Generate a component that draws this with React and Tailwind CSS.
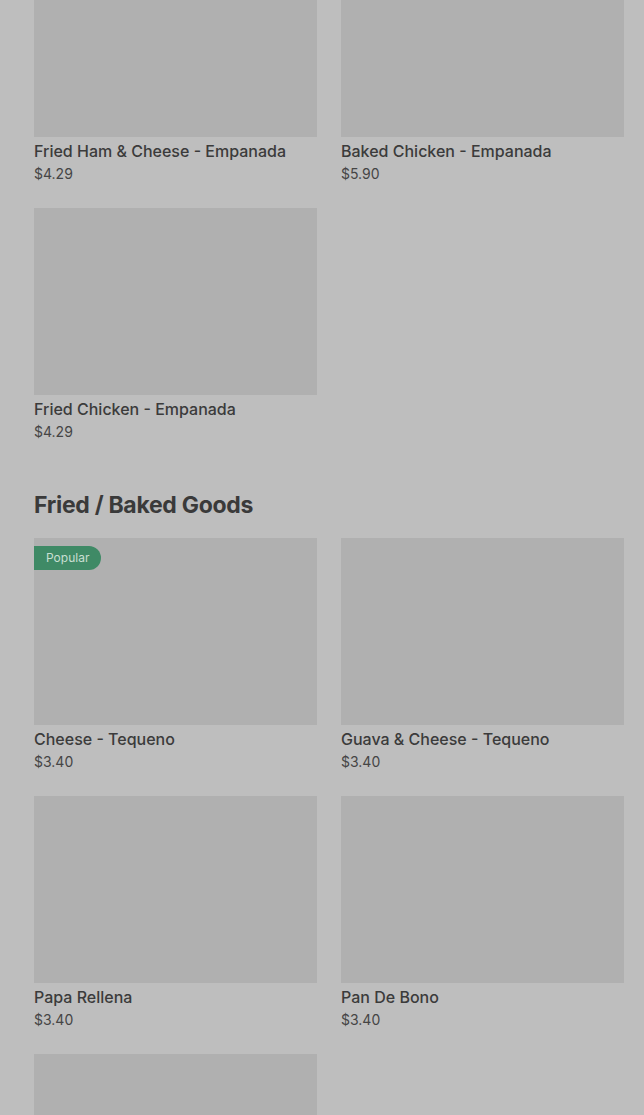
import React from "react";

function Card({ name, price, popular }) {
  return (
    <div className="flex flex-col">
      <div className="relative h-[187px] bg-[#b0b0b0]">
        {popular && (
          <span className="absolute left-0 top-[8px] h-[24px] px-[12px] flex items-center rounded-r-full bg-[#3f8a66] text-[#c9dfd2] text-[12px] leading-none">
            Popular
          </span>
        )}
      </div>
      {name && (
        <>
          <div className="mt-[4px] text-[16px] leading-[20px] font-medium text-[#3b3b3b]">{name}</div>
          <div className="mt-[3px] text-[14px] leading-[20px] text-[#454545]">{price}</div>
        </>
      )}
    </div>
  );
}

export default function App() {
  const first = [
    { name: "Fried Ham & Cheese - Empanada", price: "$4.29" },
    { name: "Baked Chicken - Empanada", price: "$5.90" },
    { name: "Fried Chicken - Empanada", price: "$4.29" },
  ];
  const second = [
    { name: "Cheese - Tequeno", price: "$3.40", popular: true },
    { name: "Guava & Cheese - Tequeno", price: "$3.40" },
    { name: "Papa Rellena", price: "$3.40" },
    { name: "Pan De Bono", price: "$3.40" },
    { name: "", price: "" },
  ];
  return (
    <div className="w-[644px] h-[1115px] overflow-hidden bg-[#bebebe]" style={{ fontFamily: "Inter, 'Noto Sans', sans-serif" }}>
      <div className="mt-[-50px] pl-[34px] pr-[20px]">
        <div className="grid grid-cols-2 gap-x-[24px] gap-y-[24px]">
          {first.map((c, i) => (
            <Card key={i} {...c} />
          ))}
        </div>
        <h2 className="mt-[47px] text-[23px] leading-[32px] font-bold text-[#3a3a3a] tracking-[-0.3px]">Fried / Baked Goods</h2>
        <div className="mt-[17px] grid grid-cols-2 gap-x-[24px] gap-y-[24px]">
          {second.map((c, i) => (
            <Card key={i} {...c} />
          ))}
        </div>
      </div>
    </div>
  );
}
